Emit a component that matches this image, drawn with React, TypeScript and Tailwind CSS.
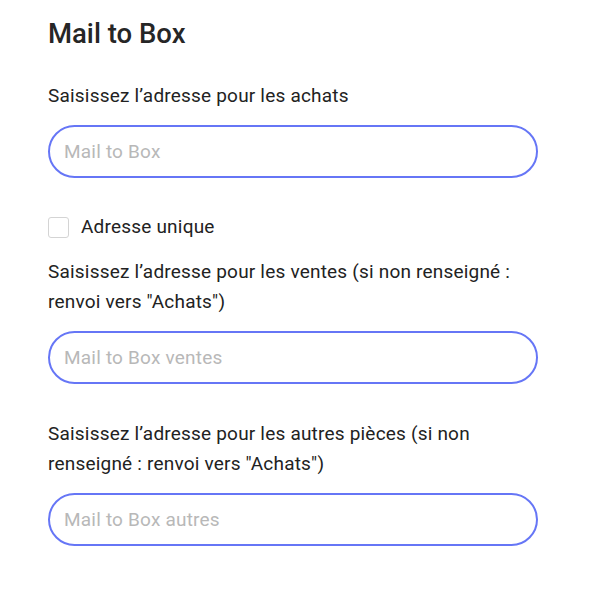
import { useState } from "react"

const font = { fontFamily: "Roboto, 'Noto Sans', sans-serif" }

export default function App() {
    const [unique, setUnique] = useState(false) // adresse unique pour achats / ventes / autres

    return (
        <div className="w-[600px] h-[599px] bg-white text-[#222222] px-[48px] pt-[17px]" style={font}>
            <h1 className="text-[27.5px] leading-[34px] font-medium text-[#262626]">Mail to Box</h1>

            <p className="mt-[30px] text-[19px] tracking-[0.2px] leading-[30px] w-[490px]">Saisissez l’adresse pour les achats</p>
            <input
                type="email"
                placeholder="Mail to Box"
                className="mt-[14px] block w-[490px] h-[53px] rounded-full border-2 border-[#6676f6] px-[14px] text-[19px] tracking-[0.2px] outline-none placeholder:text-[#b8b8b8]"
            />

            <label className="mt-[34px] flex items-center gap-[12px] h-[30px] text-[19px] tracking-[0.2px]">
                <input type="checkbox" checked={unique} onChange={() => setUnique(!unique)} className="sr-only" />
                <span className="w-[21px] h-[21px] rounded-[3px] border border-[#d4d4d4] bg-white"></span>
                <span>Adresse unique</span>
            </label>

            <p className="mt-[15px] text-[19px] tracking-[0.2px] leading-[30px] w-[490px]">Saisissez l’adresse pour les ventes (si non renseigné : renvoi vers "Achats")</p>
            <input
                type="email"
                placeholder="Mail to Box ventes"
                className="mt-[14px] block w-[490px] h-[53px] rounded-full border-2 border-[#6676f6] px-[14px] text-[19px] tracking-[0.2px] outline-none placeholder:text-[#b8b8b8]"
            />

            <p className="mt-[35px] text-[19px] tracking-[0.2px] leading-[30px] w-[490px]">Saisissez l’adresse pour les autres pièces (si non renseigné : renvoi vers "Achats")</p>
            <input
                type="email"
                placeholder="Mail to Box autres"
                className="mt-[14px] block w-[490px] h-[53px] rounded-full border-2 border-[#6676f6] px-[14px] text-[19px] tracking-[0.2px] outline-none placeholder:text-[#b8b8b8]"
            />
        </div>
    )
}
